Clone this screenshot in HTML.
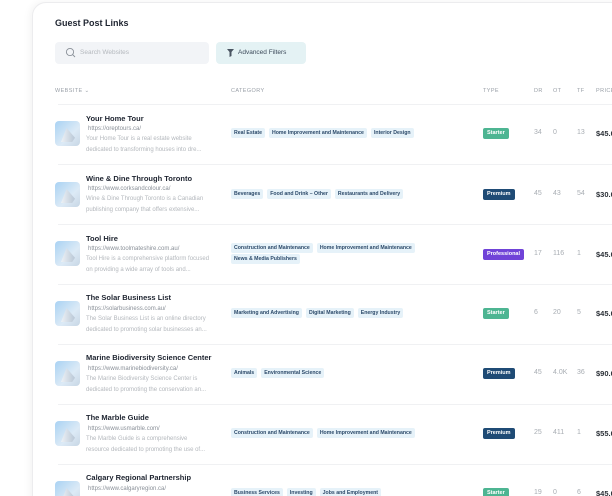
<!DOCTYPE html><html><head><style>
*{margin:0;padding:0;box-sizing:border-box}
html,body{width:612px;height:496px;overflow:hidden}
body{background:#fff;font-family:"Liberation Sans",sans-serif;position:relative}
.card{position:absolute;left:32px;top:2px;width:620px;height:600px;background:#fff;border:1px solid #ececee;border-radius:14px;box-shadow:-2px 0 8px rgba(0,0,0,.05)}
.a{position:absolute;white-space:nowrap}
.g{font-size:0;line-height:0}
.h{font-size:5.5px;color:#9aa0a8;letter-spacing:.4px;top:88px}
.sep{position:absolute;left:58px;width:560px;height:1px;background:#f0f1f3}
.t{font-size:7.5px;font-weight:bold;color:#1e2430}
.u{font-size:6px;color:#8a9098}
.d{font-size:6px;color:#b4b8bd;line-height:11px}
.th{position:absolute;left:55px;width:25px;height:25px;border-radius:4px;background:linear-gradient(135deg,#a9d2f3,#dceaf6 60%,#c7d6e4);overflow:hidden}
.th:after{content:"";position:absolute;left:6px;top:7px;width:14px;height:14px;background:linear-gradient(90deg,#eef2f6,#b9c7d6);clip-path:polygon(40% 0,100% 70%,80% 100%,0 100%)}
.tag{display:inline-block;font-size:5.2px;line-height:6px;font-weight:bold;color:#2c4a6a;background:#e6f2f9;padding:2px 3px;border-radius:2px;margin-right:4px;vertical-align:top}
.g .tag{margin-bottom:1px}
.b{position:absolute;left:483px;font-size:5.5px;line-height:7px;font-weight:bold;color:#fff;padding:2px 4px;border-radius:2px}
.st{background:#4db592}.pr{background:#1f4b75}.pf{background:#7043d8}
.n{font-size:7px;color:#a8adb3}
.p{font-size:7.5px;font-weight:bold;color:#2a2f36;left:596px}
</style></head><body>
<div class="card"></div>
<div class="a" style="left:55px;top:18px;font-size:9px;font-weight:bold;color:#1e2430">Guest Post Links</div>
<div class="a" style="left:55px;top:42px;width:154px;height:22px;background:#f2f4f7;border-radius:4px"></div>
<svg class="a" style="left:65px;top:47px" width="11" height="11" viewBox="0 0 11 11"><circle cx="5" cy="5" r="3.6" fill="none" stroke="#8a9098" stroke-width=".9"/><path d="M7.6 7.6L10 10" stroke="#8a9098" stroke-width=".9"/></svg>
<div class="a" style="left:80px;top:49px;font-size:6.5px;color:#b4b8bd">Search Websites</div>
<div class="a" style="left:216px;top:42px;width:90px;height:22px;background:#e4f2f4;border-radius:4px"></div>
<svg class="a" style="left:226px;top:48px" width="9" height="10" viewBox="0 0 9 10"><path d="M1 1H8L5.5 4V8L3.5 9V4Z" fill="#4a5562"/></svg>
<div class="a" style="left:238px;top:49px;font-size:6.5px;color:#3c4a5a">Advanced Filters</div>
<div class="a h" style="left:55px">WEBSITE &#8964;</div>
<div class="a h" style="left:231px">CATEGORY</div>
<div class="a h" style="left:483px">TYPE</div>
<div class="a h" style="left:534px">DR</div>
<div class="a h" style="left:553px">OT</div>
<div class="a h" style="left:577px">TF</div>
<div class="a h" style="left:596px">PRICE</div>
<div class="sep" style="top:104px"></div>

<div class="th" style="top:121px"></div>
<div class="a t" style="left:86px;top:114px">Your Home Tour</div>
<div class="a u" style="left:88px;top:126px">https://oreptours.ca/</div>
<div class="a d" style="left:86px;top:134px">Your Home Tour is a real estate website<br>dedicated to transforming houses into dre...</div>
<div class="a g" style="left:231px;top:128px"><span class="tag">Real Estate</span><span class="tag">Home Improvement and Maintenance</span><span class="tag">Interior Design</span></div>
<div class="b st" style="top:128px">Starter</div>
<div class="a n" style="left:534px;top:129px">34</div><div class="a n" style="left:553px;top:129px">0</div><div class="a n" style="left:577px;top:129px">13</div><div class="a p" style="top:129px">$45.00</div>
<div class="sep" style="top:164px"></div>

<div class="th" style="top:182px"></div>
<div class="a t" style="left:86px;top:174px">Wine &amp; Dine Through Toronto</div>
<div class="a u" style="left:88px;top:186px">https://www.corksandcolour.ca/</div>
<div class="a d" style="left:86px;top:194px">Wine &amp; Dine Through Toronto is a Canadian<br>publishing company that offers extensive...</div>
<div class="a g" style="left:231px;top:189px"><span class="tag">Beverages</span><span class="tag">Food and Drink – Other</span><span class="tag">Restaurants and Delivery</span></div>
<div class="b pr" style="top:189px">Premium</div>
<div class="a n" style="left:534px;top:190px">45</div><div class="a n" style="left:553px;top:190px">43</div><div class="a n" style="left:577px;top:190px">54</div><div class="a p" style="top:190px">$30.00</div>
<div class="sep" style="top:224px"></div>

<div class="th" style="top:241px"></div>
<div class="a t" style="left:86px;top:234px">Tool Hire</div>
<div class="a u" style="left:88px;top:246px">https://www.toolmateshire.com.au/</div>
<div class="a d" style="left:86px;top:254px">Tool Hire is a comprehensive platform focused<br>on providing a wide array of tools and...</div>
<div class="a g" style="left:231px;top:243px"><span class="tag">Construction and Maintenance</span><span class="tag">Home Improvement and Maintenance</span></div>
<div class="a g" style="left:231px;top:254px"><span class="tag">News &amp; Media Publishers</span></div>
<div class="b pf" style="top:249px">Professional</div>
<div class="a n" style="left:534px;top:250px">17</div><div class="a n" style="left:553px;top:250px">116</div><div class="a n" style="left:577px;top:250px">1</div><div class="a p" style="top:250px">$45.00</div>
<div class="sep" style="top:284px"></div>

<div class="th" style="top:301px"></div>
<div class="a t" style="left:86px;top:293px">The Solar Business List</div>
<div class="a u" style="left:88px;top:306px">https://solarbusiness.com.au/</div>
<div class="a d" style="left:86px;top:314px">The Solar Business List is an online directory<br>dedicated to promoting solar businesses an...</div>
<div class="a g" style="left:231px;top:308px"><span class="tag">Marketing and Advertising</span><span class="tag">Digital Marketing</span><span class="tag">Energy Industry</span></div>
<div class="b st" style="top:308px">Starter</div>
<div class="a n" style="left:534px;top:309px">6</div><div class="a n" style="left:553px;top:309px">20</div><div class="a n" style="left:577px;top:309px">5</div><div class="a p" style="top:309px">$45.00</div>
<div class="sep" style="top:344px"></div>

<div class="th" style="top:361px"></div>
<div class="a t" style="left:86px;top:353px">Marine Biodiversity Science Center</div>
<div class="a u" style="left:88px;top:366px">https://www.marinebiodiversity.ca/</div>
<div class="a d" style="left:86px;top:374px">The Marine Biodiversity Science Center is<br>dedicated to promoting the conservation an...</div>
<div class="a g" style="left:231px;top:368px"><span class="tag">Animals</span><span class="tag">Environmental Science</span></div>
<div class="b pr" style="top:368px">Premium</div>
<div class="a n" style="left:534px;top:369px">45</div><div class="a n" style="left:553px;top:369px">4.0K</div><div class="a n" style="left:577px;top:369px">36</div><div class="a p" style="top:369px">$90.00</div>
<div class="sep" style="top:404px"></div>

<div class="th" style="top:421px"></div>
<div class="a t" style="left:86px;top:413px">The Marble Guide</div>
<div class="a u" style="left:88px;top:426px">https://www.usmarble.com/</div>
<div class="a d" style="left:86px;top:434px">The Marble Guide is a comprehensive<br>resource dedicated to promoting the use of...</div>
<div class="a g" style="left:231px;top:428px"><span class="tag">Construction and Maintenance</span><span class="tag">Home Improvement and Maintenance</span></div>
<div class="b pr" style="top:428px">Premium</div>
<div class="a n" style="left:534px;top:429px">25</div><div class="a n" style="left:553px;top:429px">411</div><div class="a n" style="left:577px;top:429px">1</div><div class="a p" style="top:429px">$55.00</div>
<div class="sep" style="top:464px"></div>

<div class="th" style="top:481px"></div>
<div class="a t" style="left:86px;top:473px">Calgary Regional Partnership</div>
<div class="a u" style="left:88px;top:486px">https://www.calgaryregion.ca/</div>
<div class="a g" style="left:231px;top:488px"><span class="tag">Business Services</span><span class="tag">Investing</span><span class="tag">Jobs and Employment</span></div>
<div class="b st" style="top:488px">Starter</div>
<div class="a n" style="left:534px;top:489px">19</div><div class="a n" style="left:553px;top:489px">0</div><div class="a n" style="left:577px;top:489px">6</div><div class="a p" style="top:489px">$45.00</div>
</body></html>
